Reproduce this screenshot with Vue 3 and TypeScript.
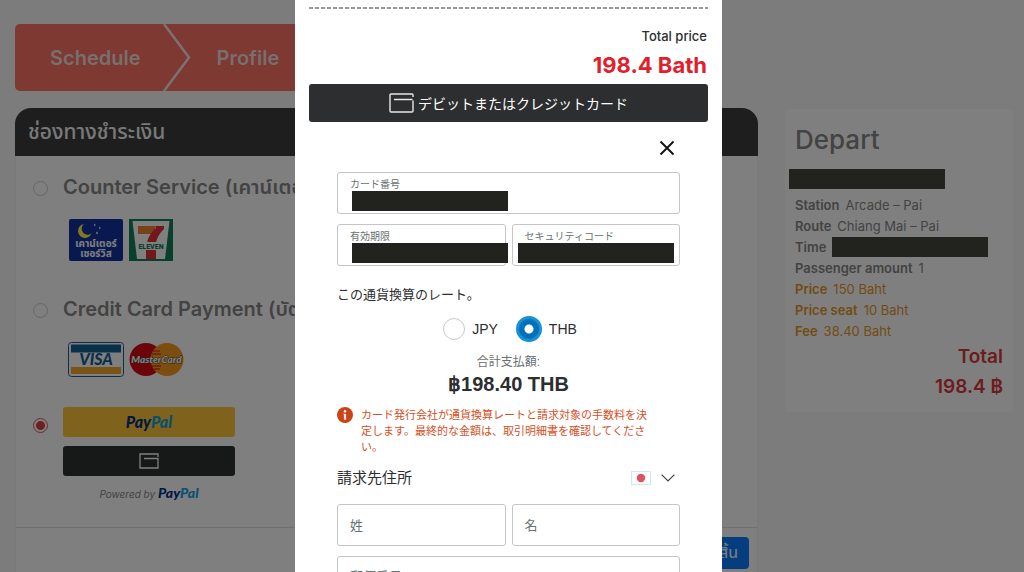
<script setup lang="ts">
import { ref } from 'vue'

interface TripLine {
  label: string
  value: string
  price?: boolean
  hidden?: boolean
}

const method = ref<'counter' | 'credit' | 'paypal'>('paypal')
const currency = ref<'JPY' | 'THB'>('THB')
const country = ref('JP')

const trip: TripLine[] = [
  { label: 'Station', value: 'Arcade – Pai' },
  { label: 'Route', value: 'Chiang Mai – Pai' },
  { label: 'Time', value: '', hidden: true },
  { label: 'Passenger amount', value: '1' },
  { label: 'Price', value: '150 Baht', price: true },
  { label: 'Price seat', value: '10 Baht', price: true },
  { label: 'Fee', value: '38.40 Baht', price: true },
]
</script>

<template>
  <div class="page">
    <main class="main">
      <nav class="steps">
        <a href="#schedule" class="step">Schedule</a>
        <svg class="step-arrow" viewBox="0 0 28 67" aria-hidden="true">
          <path d="M1 0 L26 33.500 L1 67" fill="none" stroke="#f6e4e2" stroke-width="2.500" />
        </svg>
        <a href="#profile" class="step">Profile</a>
      </nav>

      <section class="card">
        <h2 class="card-head">ช่องทางชำระเงิน</h2>
        <div class="methods">
          <div class="method">
            <input id="m-counter" v-model="method" class="radio" type="radio" name="method" value="counter" />
            <div class="method-body">
              <label class="method-name" for="m-counter">Counter Service (เคาน์เตอร์เซอร์วิส)</label>
              <div class="logos">
                <svg width="54" height="42" viewBox="0 0 54 42" aria-hidden="true">
                  <rect width="54" height="42" rx="2" fill="#12309c" />
                  <path d="M15 5a7 7 0 1 0 7.500 9.500A6 6 0 0 1 15 5z" fill="#fff04a" />
                  <path d="M25 6l.8 1.500 .8-1.500-.8-1.500zM30 9l.8 1.500.8-1.500-.8-1.500zM27 14l1 1.500 1-1.500-1-1.500z" fill="#fff" />
                  <text x="27" y="28" text-anchor="middle" class="thai-logo">เคาน์เตอร์</text>
                  <text x="27" y="38" text-anchor="middle" class="thai-logo">เซอร์วิส</text>
                </svg>
                <svg width="44" height="42" viewBox="0 0 44 42" aria-hidden="true">
                  <rect width="44" height="42" fill="#12805a" />
                  <path d="M3.500 2h37L36 40H8z" fill="#fff" />
                  <path d="M9 7h18l-3 8H9z" fill="#ef8532" />
                  <path d="M27 7h8v3c-5 5-7 9-8 14h-9c1-6 5-12 9-15z" fill="#e5303a" />
                  <path d="M17 31h10v9H17z" fill="#e5303a" />
                  <rect x="7" y="23" width="30" height="8" fill="#fff" />
                  <text x="22" y="30" text-anchor="middle" class="eleven">ELEVEN</text>
                </svg>
              </div>
            </div>
          </div>

          <div class="method credit-method">
            <input id="m-credit" v-model="method" class="radio" type="radio" name="method" value="credit" />
            <div class="method-body">
              <label class="method-name" for="m-credit">Credit Card Payment (บัตรเครดิต)</label>
              <div class="logos cards">
                <svg width="56" height="35" viewBox="0 0 56 35" aria-hidden="true">
                  <rect x=".5" y=".5" width="55" height="34" rx="3" fill="#fff" stroke="#1f5f92" />
                  <path d="M3 2.500h50v8H3z" fill="#145e91" />
                  <path d="M3 25h50v7H3z" fill="#f3a72e" />
                  <text x="28" y="23" text-anchor="middle" class="visa">VISA</text>
                </svg>
                <svg width="55" height="35" viewBox="0 0 55 35" aria-hidden="true">
                  <circle cx="17" cy="17.500" r="16.500" fill="#d80a12" />
                  <circle cx="38" cy="17.500" r="16.500" fill="#f79a1d" />
                  <path d="M24 9h7M23 12h9M23 24h9M25 27h6" stroke="#d80a12" stroke-width="1" />
                  <text x="27.500" y="21" text-anchor="middle" class="master">MasterCard</text>
                </svg>
              </div>
            </div>
          </div>

          <div class="method paypal-method">
            <input id="m-paypal" v-model="method" class="radio" type="radio" name="method" value="paypal" aria-label="PayPal" />
            <div class="method-body pay-buttons">
              <button type="button" class="pay gold" aria-label="PayPal">
                <span class="pp"><span class="pp-a">Pay</span><span class="pp-b">Pal</span></span>
              </button>
              <button type="button" class="pay dark" aria-label="Card">
                <svg width="20" height="16" viewBox="0 0 20 16" aria-hidden="true">
                  <path d="M5 5.500h14v9.500H1V1h18v3" fill="none" stroke="#fff" stroke-width="1.300" />
                </svg>
              </button>
              <p class="powered">Powered by <span class="pp"><span class="pp-a">Pay</span><span class="pp-b">Pal</span></span></p>
            </div>
          </div>
        </div>
        <footer class="card-foot">
          <button type="button" class="finish">เสร็จสิ้น</button>
        </footer>
      </section>
    </main>

    <aside class="trip">
      <h2 class="trip-title">Depart</h2>
      <div class="mask date-mask"></div>
      <p v-for="line in trip" :key="line.label" class="trip-line" :class="{ amber: line.price }">
        <b>{{ line.label }}</b>
        <span v-if="line.hidden" class="mask time-mask"></span>
        <span v-else>{{ line.value }}</span>
      </p>
      <p class="trip-total">Total<br />198.4 ฿</p>
    </aside>
  </div>

  <div class="overlay">
    <div class="modal" role="dialog" aria-modal="true" aria-label="Total price">
      <div class="total-label">Total price</div>
      <div class="total-value">198.4 Bath</div>
      <button type="button" class="card-button">
        <svg width="25" height="20" viewBox="0 0 25 20" aria-hidden="true">
          <path d="M5 6.500h18.500M24 7.500V18a1 1 0 0 1-1 1H2a1 1 0 0 1-1-1V2a1 1 0 0 1 1-1h21a1 1 0 0 1 1 1v2" fill="none" stroke="#e8e8e8" stroke-width="1.400" />
        </svg>
        <span>デビットまたはクレジットカード</span>
      </button>

      <form class="form" @submit.prevent>
        <button type="button" class="close" aria-label="Close">
          <svg width="16" height="16" viewBox="0 0 16 16" aria-hidden="true">
            <path d="M1.500 1.500l13 13M14.500 1.500l-13 13" stroke="#111" stroke-width="1.900" />
          </svg>
        </button>

        <div class="fields">
          <div class="field wide">
            <label for="number">カード番号</label>
            <input id="number" type="text" />
            <span class="mask field-mask"></span>
          </div>
          <div class="field">
            <label for="expiry">有効期限</label>
            <input id="expiry" type="text" />
            <span class="mask field-mask"></span>
          </div>
          <div class="field code">
            <label for="csc">セキュリティコード</label>
            <input id="csc" type="text" />
            <span class="mask field-mask"></span>
          </div>
        </div>

        <p class="rate">この通貨換算のレート。</p>
        <div class="currencies">
          <label><input v-model="currency" type="radio" name="currency" value="JPY" /><span>JPY</span></label>
          <label><input v-model="currency" type="radio" name="currency" value="THB" /><span>THB</span></label>
        </div>
        <p class="sum-label">合計支払額:</p>
        <p class="sum">฿198.40 THB</p>

        <div class="notice">
          <svg width="16" height="16" viewBox="0 0 16 16" aria-hidden="true">
            <circle cx="8" cy="8" r="8" fill="#c9441a" />
            <circle cx="8" cy="4.300" r="1.200" fill="#fff" />
            <path d="M6.500 7H8.700v5.500H7.300V7.500z" fill="#fff" stroke="#fff" stroke-width=".5" />
          </svg>
          <p>カード発行会社が通貨換算レートと請求対象の手数料を決定します。最終的な金額は、取引明細書を確認してください。</p>
        </div>

        <div class="address">
          <h3>請求先住所</h3>
          <div class="country">
            <svg width="20" height="14" viewBox="0 0 20 14" aria-hidden="true">
              <rect x=".5" y=".5" width="19" height="13" fill="#fff" stroke="#d5e5e9" />
              <circle cx="10" cy="7" r="4.200" fill="#e0525f" />
            </svg>
            <svg width="14" height="8" viewBox="0 0 14 8" aria-hidden="true">
              <path d="M.6.6L7 7 13.400.6" fill="none" stroke="#444" stroke-width="1.200" />
            </svg>
            <select v-model="country" aria-label="国">
              <option value="JP"></option>
            </select>
          </div>
        </div>

        <div class="fields">
          <input class="box" type="text" placeholder="姓" aria-label="姓" />
          <input class="box" type="text" placeholder="名" aria-label="名" />
          <input class="box postal wide" type="text" placeholder="郵便番号" aria-label="郵便番号" />
        </div>
      </form>
    </div>
  </div>
</template>

<style>
body {
  margin: 0;
  overflow: hidden;
  background: #f8f8f8;
}
</style>

<style scoped>
* {
  box-sizing: border-box;
}
p,
h2,
h3 {
  margin: 0;
}
button,
input {
  font-family: inherit;
}
.page {
  display: flex;
  align-items: flex-start;
  gap: 27px;
  min-height: 100vh;
  padding: 24px 11px 0 15px;
  font-family: Inter, "Noto Sans", "Noto Sans Thai", sans-serif;
  color: #868686;
}
.main {
  flex: 1;
  min-width: 0;
}
.steps {
  display: flex;
  align-items: center;
  width: 80%;
  height: 67px;
  border-radius: 5px;
  background: #fa7264;
  padding-left: 35px;
}
.step {
  color: #f0dedc;
  font-size: 20px;
  font-weight: 600;
  line-height: 28px;
  text-decoration: none;
}
.step-arrow {
  width: 28px;
  height: 67px;
  margin: 0 26px 0 22px;
}
.card {
  margin-top: 17px;
  border-radius: 16px 16px 0 0;
  background: #fff;
}
.card-head {
  padding: 0 13px;
  border-radius: 16px 16px 0 0;
  background: #3c3c3c;
  color: #f2f2f2;
  font-size: 21px;
  font-weight: 500;
  line-height: 48px;
}
.methods {
  padding: 16px 18px 0;
  border: solid #f3f3f3;
  border-width: 0 1px;
}
.method {
  display: flex;
  align-items: flex-start;
  gap: 16px;
  height: 122px;
}
.radio {
  appearance: none;
  flex: none;
  width: 15px;
  height: 15px;
  margin: 9px 0 0 -1px;
  border: 1px solid #ccc;
  border-radius: 50%;
  background: #fff;
}
.radio:checked {
  border-color: #e05858;
  background: radial-gradient(circle, #df3f45 4px, #fff 5px);
}
.method-body {
  margin-left: -1px;
}
.method-name {
  display: block;
  font-size: 20px;
  font-weight: 600;
  line-height: 30px;
  white-space: nowrap;
}
.logos {
  display: flex;
  gap: 6px;
  padding: 17px 0 0 6px;
}
.cards {
  gap: 5px;
  padding: 18px 0 0 5px;
}
.thai-logo {
  fill: #fff;
  font-size: 10px;
  font-weight: 700;
}
.eleven {
  fill: #12805a;
  font: 900 7px Roboto, sans-serif;
}
.visa {
  fill: #145e91;
  font: italic 900 16px Lato, sans-serif;
}
.master {
  fill: #fff;
  stroke: #444;
  stroke-width: 1px;
  paint-order: stroke;
  font: italic 900 10px Lato, sans-serif;
}
.credit-method {
  height: 106px;
}
.paypal-method {
  height: 127px;
  padding-top: 7px;
}
.paypal-method .radio {
  margin-top: 11px;
}
.pay-buttons {
  display: flex;
  flex-direction: column;
  gap: 9px;
  width: 172px;
}
.pay {
  display: flex;
  align-items: center;
  justify-content: center;
  height: 30px;
  padding: 0;
  border: 0;
  border-radius: 3px;
}
.gold {
  background: #ffc439;
}
.dark {
  background: #2c3230;
}
.pp {
  font: italic 900 16px/16px Lato, sans-serif;
}
.powered .pp {
  font-size: 14px;
}
.pp-a {
  color: #003087;
}
.pp-b {
  color: #0fa0dd;
}
.powered {
  font-size: 10px;
  font-style: italic;
  line-height: 10px;
  text-align: center;
  white-space: nowrap;
}
.card-foot {
  display: flex;
  justify-content: flex-end;
  padding: 9px 8px 16px;
  border: 1px solid #f0f0f0;
  border-top-color: #e0e0e0;
}
.finish {
  height: 32px;
  padding: 0 11px;
  border: 0;
  border-radius: 4px;
  background: #0a7cff;
  color: #fff;
  font-size: 16px;
}
.trip {
  width: 228px;
  margin-top: 85px;
  padding: 14px 10px 10px;
  border-radius: 3px;
  background: #fff;
}
.trip-title {
  font-size: 26px;
  font-weight: 500;
  line-height: 34px;
}
.mask {
  background: #22221e;
}
.trip .mask {
  background: #44443d;
}
.date-mask {
  width: 156px;
  height: 20px;
  margin: 12px 0 6px -6px;
}
.trip-line {
  display: flex;
  gap: 6px;
  font-size: 13px;
  line-height: 21px;
}
.trip-line b {
  font-weight: 600;
}
.amber {
  color: #e59726;
}
.time-mask {
  width: 156px;
  height: 20px;
}
.trip-total {
  color: #d8383c;
  font-size: 19px;
  font-weight: 600;
  line-height: 30px;
  text-align: right;
}
.overlay {
  position: fixed;
  inset: 0;
  display: flex;
  justify-content: center;
  padding-right: 7px;
  overflow: hidden;
  background: rgba(0, 0, 0, 0.5);
  font-family: "Liberation Sans", "Noto Sans CJK JP", sans-serif;
  color: #2c2e2f;
}
.modal {
  width: 427px;
  height: max-content;
  padding: 7px 14px 24px;
  background: #fff;
}
.modal::before {
  content: "";
  display: block;
  height: 2px;
  margin-bottom: 17px;
  background: repeating-linear-gradient(90deg, #999 0 4px, #fff 4px 6px);
}
.total-label,
.total-value {
  padding-right: 1px;
  font-family: Inter, sans-serif;
  text-align: right;
}
.total-label {
  font-size: 13px;
  font-weight: 500;
  line-height: 20px;
}
.total-value {
  color: #e0202b;
  font-size: 22px;
  font-weight: 700;
  line-height: 38px;
}
.card-button {
  display: flex;
  align-items: center;
  justify-content: center;
  gap: 4px;
  width: 100%;
  height: 38px;
  padding: 0;
  border: 0;
  border-radius: 3px;
  background: #2c2e2f;
  color: #fff;
  font-size: 14px;
}
.form {
  padding: 14px 28px 0;
}
.close {
  display: block;
  height: 24px;
  margin: 0 5px 12px auto;
  padding: 4px 0;
  border: 0;
  background: none;
}
.close svg {
  display: block;
}
.fields {
  display: grid;
  grid-template-columns: 1fr 1fr;
  gap: 10px 6px;
}
.wide {
  grid-column: 1 / -1;
}
.field {
  position: relative;
  height: 42px;
  border: 1px solid #c3c5c7;
  border-radius: 3px;
}
.field label {
  display: block;
  padding: 5px 12px 0;
  color: #687173;
  font-size: 10px;
  line-height: 14px;
}
.field input {
  display: block;
  width: 100%;
  height: 21px;
  padding: 0 12px;
  border: 0;
  background: none;
  font-size: 13px;
  outline: 0;
}
.field-mask {
  position: absolute;
  top: 18px;
  left: 14px;
  width: 156px;
  height: 20px;
}
.code .field-mask {
  left: 5px;
}
.rate {
  margin-top: 19px;
  font-size: 13px;
  line-height: 20px;
}
.currencies {
  display: flex;
  justify-content: center;
  gap: 18px;
  height: 26px;
  margin-top: 11px;
  padding-left: 3px;
  font-size: 14px;
}
.currencies label {
  display: flex;
  align-items: center;
  gap: 7px;
}
.currencies input {
  appearance: none;
  width: 22px;
  height: 22px;
  margin: 0;
  border: 1px solid #c6c8ca;
  border-radius: 50%;
}
.currencies input:checked {
  width: 26px;
  height: 26px;
  border: 3px solid #1691d6;
  background: radial-gradient(circle, #fff 4px, #0070ba 5px);
}
.sum-label {
  margin-top: 12px;
  color: #687173;
  font-size: 12px;
  line-height: 16px;
  text-align: center;
}
.sum {
  margin-top: 2px;
  font-size: 20px;
  font-weight: 700;
  line-height: 24px;
  text-align: center;
}
.notice {
  display: flex;
  align-items: flex-start;
  gap: 8px;
  margin-top: 11px;
  padding-right: 28px;
  color: #d5501f;
  font-size: 11px;
  line-height: 16px;
}
.notice svg {
  flex: none;
}
.address {
  display: flex;
  align-items: center;
  justify-content: space-between;
  margin: 11px 0 14px;
}
.address h3 {
  font-size: 15px;
  font-weight: 400;
  line-height: 24px;
}
.country {
  position: relative;
  display: flex;
  align-items: center;
  gap: 10px;
  padding-right: 5px;
}
.country select {
  position: absolute;
  inset: 0;
  width: 100%;
  opacity: 0;
}
.box {
  width: 100%;
  height: 42px;
  padding: 0 12px;
  border: 1px solid #c3c5c7;
  border-radius: 3px;
  background: #fff;
  font-size: 13px;
}
.postal {
  height: 40px;
}
.box::placeholder {
  color: #687173;
  opacity: 1;
}
</style>
